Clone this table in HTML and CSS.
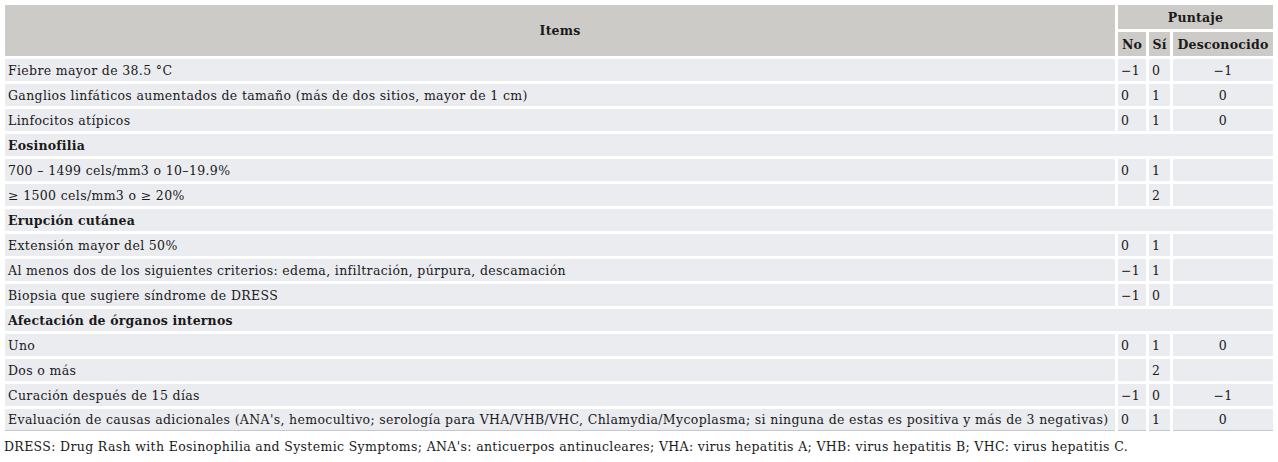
FILE: index.html
```html
<!DOCTYPE html>
<html lang="es">
<head>
<meta charset="utf-8">
<title>Puntaje DRESS</title>
<link rel="stylesheet" href="styles.css">
</head>
<body>
<table class="score">
  <thead>
    <tr>
      <th class="items" rowspan="2">Items</th>
      <th colspan="3">Puntaje</th>
    </tr>
    <tr>
      <th class="c-no">No</th>
      <th class="c-si">Sí</th>
      <th class="c-dk">Desconocido</th>
    </tr>
  </thead>
  <tbody>
    <tr><td>Fiebre mayor de 38.5 °C</td><td>−1</td><td>0</td><td class="ctr">−1</td></tr>
    <tr><td>Ganglios linfáticos aumentados de tamaño (más de dos sitios, mayor de 1 cm)</td><td>0</td><td>1</td><td class="ctr">0</td></tr>
    <tr><td>Linfocitos atípicos</td><td>0</td><td>1</td><td class="ctr">0</td></tr>
    <tr><td class="group" colspan="4">Eosinofilia</td></tr>
    <tr><td>700 – 1499 cels/mm3 o 10–19.9%</td><td>0</td><td>1</td><td></td></tr>
    <tr><td>≥ 1500 cels/mm3 o ≥ 20%</td><td></td><td>2</td><td></td></tr>
    <tr><td class="group" colspan="4">Erupción cutánea</td></tr>
    <tr><td>Extensión mayor del 50%</td><td>0</td><td>1</td><td></td></tr>
    <tr><td>Al menos dos de los siguientes criterios: edema, infiltración, púrpura, descamación</td><td>−1</td><td>1</td><td></td></tr>
    <tr><td>Biopsia que sugiere síndrome de DRESS</td><td>−1</td><td>0</td><td></td></tr>
    <tr><td class="group" colspan="4">Afectación de órganos internos</td></tr>
    <tr><td>Uno</td><td>0</td><td>1</td><td class="ctr">0</td></tr>
    <tr><td>Dos o más</td><td></td><td>2</td><td></td></tr>
    <tr><td>Curación después de 15 días</td><td>−1</td><td>0</td><td class="ctr">−1</td></tr>
    <tr class="last"><td>Evaluación de causas adicionales (ANA's, hemocultivo; serología para VHA/VHB/VHC, Chlamydia/Mycoplasma; si ninguna de estas es positiva y más de 3 negativas)</td><td>0</td><td>1</td><td class="ctr">0</td></tr>
  </tbody>
</table>
<p class="note">DRESS: Drug Rash with Eosinophilia and Systemic Symptoms; ANA's: anticuerpos antinucleares; VHA: virus hepatitis A; VHB: virus hepatitis B; VHC: virus hepatitis C.</p>
</body>
</html>
```
FILE: styles.css
```css
html, body {
  background: #ffffff;
}
body {
  margin: 2px;
  font-family: "DejaVu Serif", "Liberation Serif", serif;
  font-size: 12.5px;
  letter-spacing: 0.35px;
  color: #1a1a1a;
}
.score {
  width: 1274px;
  border-collapse: separate;
  border-spacing: 3px;
}
.score th {
  background: #cccbc8;
  font-weight: bold;
  letter-spacing: 0.2px;
  text-align: center;
  height: 24px;
  padding: 0 3px;
  vertical-align: middle;
}
.score th.c-no { width: 22px; }
.score th.c-si { width: 15px; }
.score th.c-dk { width: 94px; }
.score td {
  background: #ebecf0;
  height: 22px;
  padding: 0 3px;
  vertical-align: middle;
  white-space: nowrap;
}
.score td.ctr { text-align: center; }
.score td.group { font-weight: bold; letter-spacing: 0.2px; }
.score tr.last td {
  border-bottom: 1px solid #c8c8c8;
  height: 21px;
}
.note {
  margin: 4px 0 0 2px;
  line-height: 18px;
}
```
